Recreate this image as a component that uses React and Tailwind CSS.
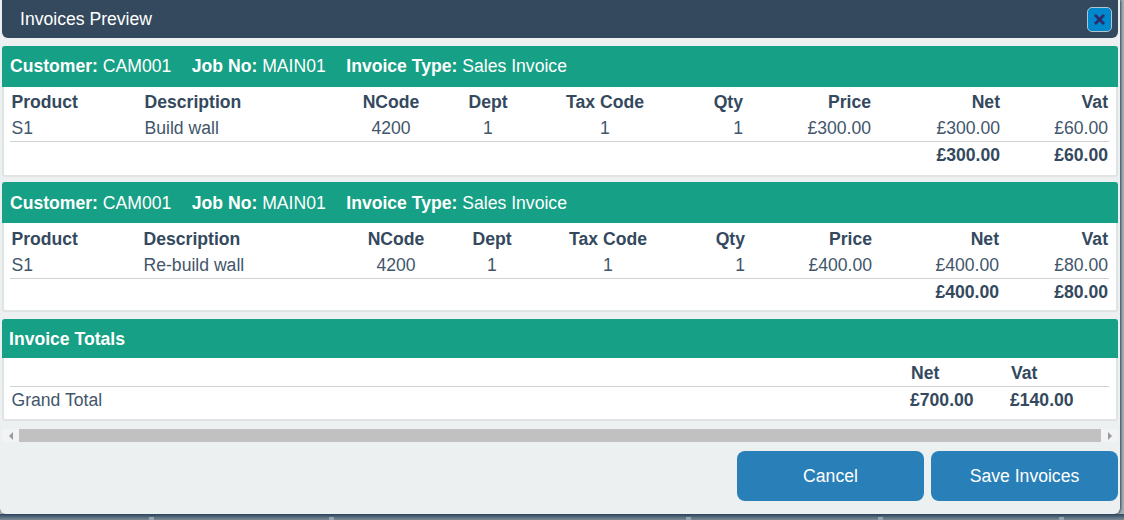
import React from "react";
import { X } from "lucide-react";

const colsA = "grid-cols-[134.5px_191.5px_110px_84px_150px_63px_128px_129px_109px]";
const colsB = "grid-cols-[133.5px_197.5px_110px_82px_150px_62px_127px_127px_110px]";

const invoices = [
  { cols: colsA, bar: "pb-[1px]", headRow: "h-[29px]", bottom: "pb-[7px]", desc: "Build wall", price: "£300.00", net: "£300.00", vat: "£60.00", totalNet: "£300.00", totalVat: "£60.00" },
  { cols: colsB, bar: "", headRow: "h-[30px] pt-[2px]", bottom: "pb-[5px]", desc: "Re-build wall", price: "£400.00", net: "£400.00", vat: "£80.00", totalNet: "£400.00", totalVat: "£80.00" },
];

function InvoiceCard({ inv }) {
  return (
    <div className="bg-white border-2 border-t-0 border-[#dfe3e4] rounded-b-[3px]">
      <div className={`-mx-[2px] h-[41px] bg-[#16a085] text-white rounded-t-[3px] flex items-center gap-[20.5px] pl-[8px] ${inv.bar}`}>
        <span><b>Customer:</b> CAM001</span>
        <span><b>Job No:</b> MAIN01</span>
        <span><b>Invoice Type:</b> Sales Invoice</span>
      </div>
      <div className={`pl-[6px] pr-[7px] ${inv.bottom}`}>
        <div className={`grid ${inv.cols} ${inv.headRow} items-center font-bold`}>
          <span className="pl-[1.5px]">Product</span>
          <span>Description</span>
          <span className="text-center">NCode</span>
          <span className="text-center">Dept</span>
          <span className="text-center">Tax Code</span>
          <span className="text-right">Qty</span>
          <span className="text-right">Price</span>
          <span className="text-right">Net</span>
          <span className="text-right pr-[1px]">Vat</span>
        </div>
        <div className={`grid ${inv.cols} h-[26px] pb-[2px] items-center border-b border-[#cfd3d4] text-[#42566b]`}>
          <span className="pl-[1.5px]">S1</span>
          <span>{inv.desc}</span>
          <span className="text-center">4200</span>
          <span className="text-center">1</span>
          <span className="text-center">1</span>
          <span className="text-right">1</span>
          <span className="text-right">{inv.price}</span>
          <span className="text-right">{inv.net}</span>
          <span className="text-right pr-[1px]">{inv.vat}</span>
        </div>
        <div className={`grid ${inv.cols} h-[26px] items-center font-bold`}>
          <span className="col-start-8 text-right">{inv.totalNet}</span>
          <span className="text-right pr-[1px]">{inv.totalVat}</span>
        </div>
      </div>
    </div>
  );
}

export default function App() {
  return (
    <div className="w-[1124px] h-[520px] overflow-hidden bg-[#aab2b9] text-[#34495e] text-[17.6px] leading-[22px] font-['Liberation_Sans',Arial,sans-serif]">
      <div className="relative w-[1120px] h-[514px] bg-[#ecf0f1] rounded-b-[6px] shadow-[1px_0_3px_#2c3e50] px-[2px]">
        <div className="h-[38px] bg-[#34495e] rounded-b-[6px] flex items-center justify-between pl-[18px] pr-[6px] text-white">
          <span>Invoices Preview</span>
          <button className="w-[25px] h-[25px] rounded-[5px] bg-[#0088cc] border border-[#b4c4d0] flex items-center justify-center">
            <X size={15} strokeWidth={4.5} className="text-[#2c2c6e]" />
          </button>
        </div>

        <div className="mt-[8px] flex flex-col gap-[5px]">
          {invoices.map((inv, i) => <InvoiceCard key={i} inv={inv} />)}
        </div>

        <div className="mt-[7px] bg-white border-2 border-t-0 border-[#dfe3e4] rounded-b-[3px]">
          <div className="-mx-[2px] h-[39px] bg-[#16a085] text-white font-bold rounded-t-[3px] flex items-center pl-[7px]">Invoice Totals</div>
          <div className="pl-[6px] pr-[7px]">
            <div className="grid grid-cols-[900px_100px_1fr] h-[29px] pt-[1px] items-center font-bold border-b border-[#cfd3d4]">
              <span />
              <span className="pl-[1px]">Net</span>
              <span className="pl-[1px]">Vat</span>
            </div>
            <div className="grid grid-cols-[900px_100px_1fr] h-[32px] pb-[6px] items-center">
              <span className="pl-[1.5px] text-[#42566b]">Grand Total</span>
              <span className="font-bold">£700.00</span>
              <span className="font-bold">£140.00</span>
            </div>
          </div>
        </div>

        <div className="mt-[8px] h-[13px] bg-[#f1f3f4] flex items-center">
          <span className="w-[17px] flex justify-center">
            <span className="border-y-[4px] border-y-transparent border-r-[4px] border-r-[#9a9a9a]" />
          </span>
          <div className="flex-1 h-full bg-[#c1c1c1]" />
          <span className="w-[17px] flex justify-center">
            <span className="border-y-[4px] border-y-transparent border-l-[4px] border-l-[#9a9a9a]" />
          </span>
        </div>

        <div className="mt-[9px] flex justify-end gap-[7px]">
          <button className="w-[187px] h-[50px] pb-[1px] rounded-[8px] bg-[#2980b9] text-white">Cancel</button>
          <button className="w-[187px] h-[50px] pb-[1px] rounded-[8px] bg-[#2980b9] text-white">Save Invoices</button>
        </div>
      </div>

      {/* page showing below the dialog */}
      <div className="h-[6px] bg-linear-to-b from-[#2f4a62] to-[#7d8a96] flex items-end">
        <span className="ml-[149px] w-[5px] h-[3px] bg-[#98a4ae]" />
        <span className="ml-[175px] w-[5px] h-[3px] bg-[#98a4ae]" />
        <span className="ml-[352px] w-[5px] h-[3px] bg-[#98a4ae]" />
        <span className="ml-[187px] w-[5px] h-[3px] bg-[#98a4ae]" />
        <span className="ml-[176px] w-[5px] h-[3px] bg-[#98a4ae]" />
      </div>
    </div>
  );
}
